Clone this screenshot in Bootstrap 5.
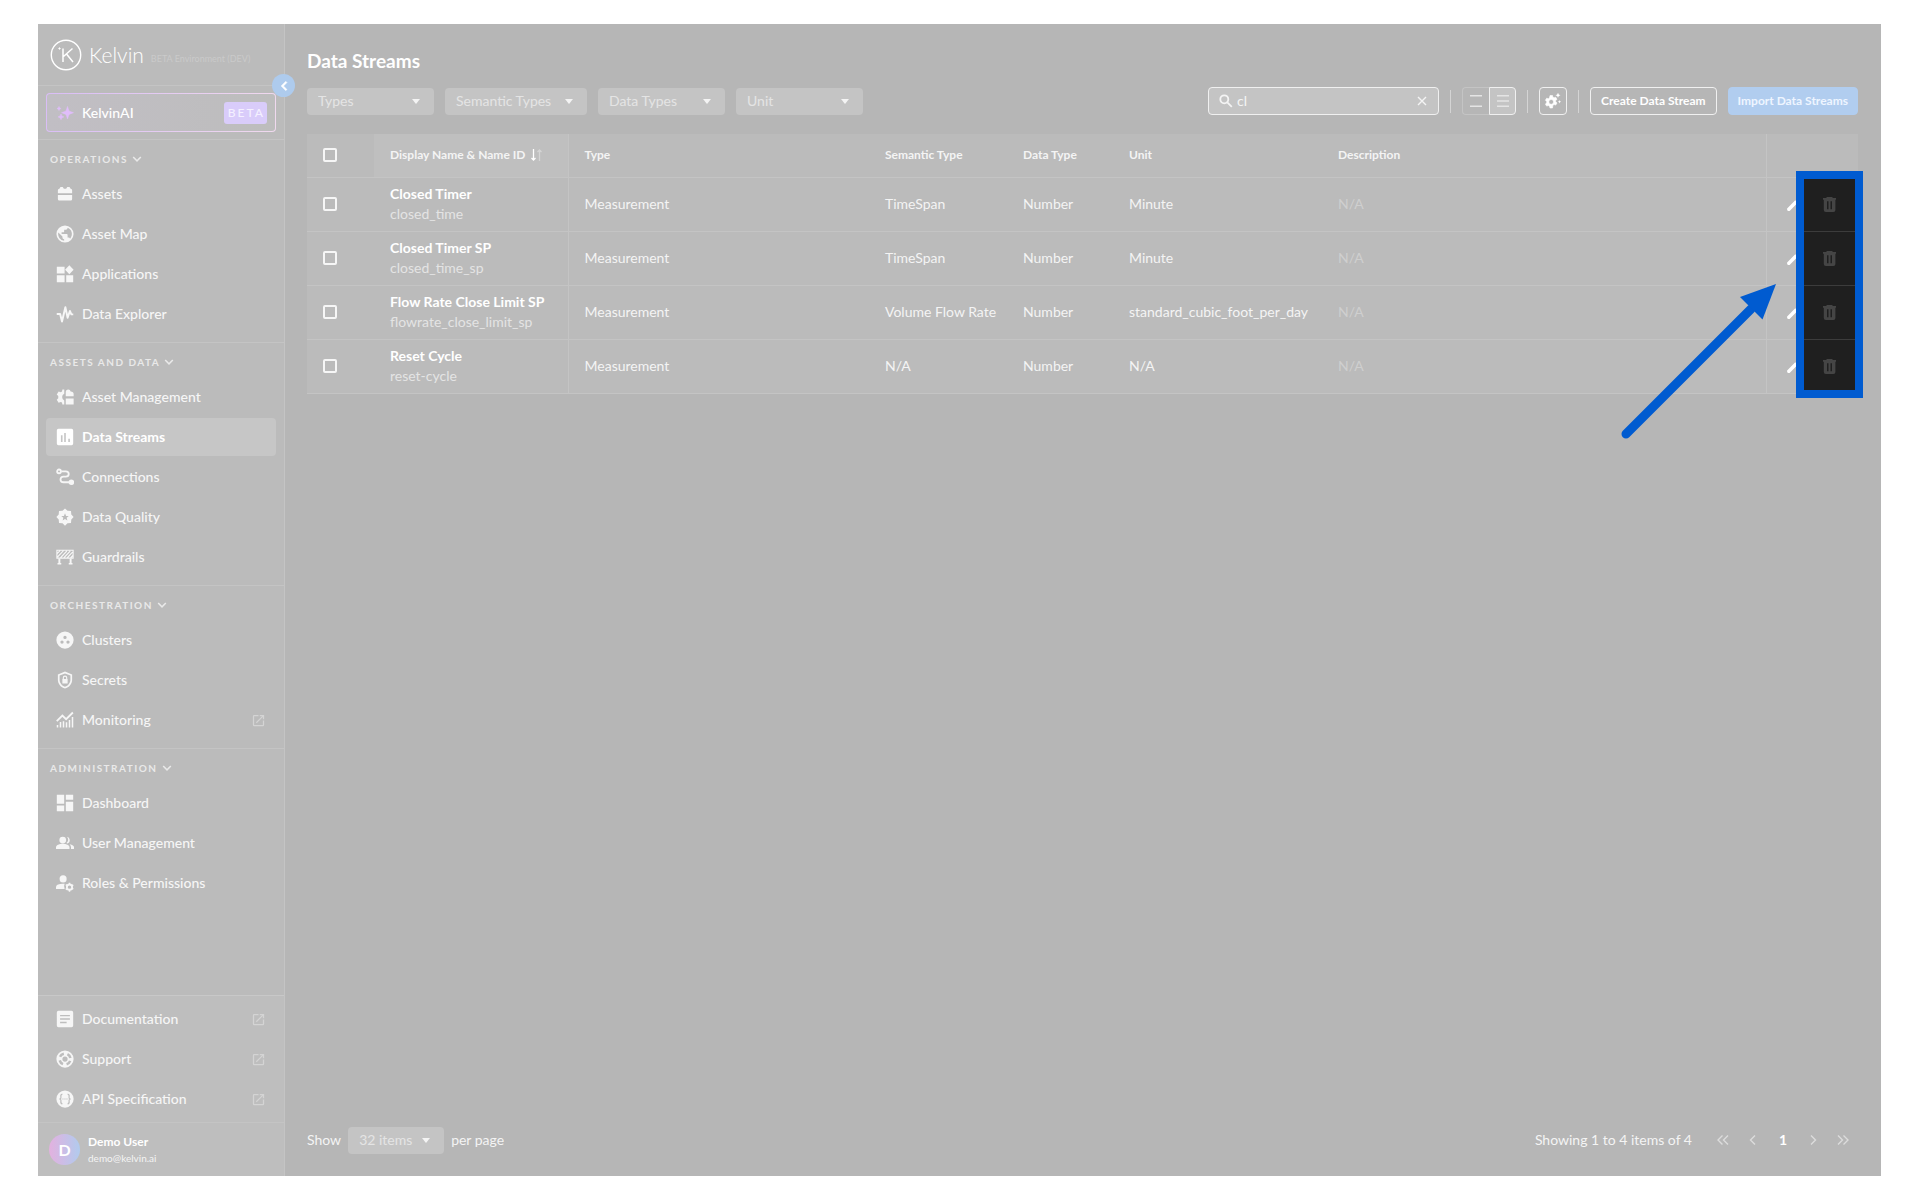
<!DOCTYPE html>
<html lang="en">
<head>
<meta charset="utf-8">
<meta name="viewport" content="width=device-width, initial-scale=1">
<title>Kelvin - Data Streams</title>
<link href="https://cdn.jsdelivr.net/npm/bootstrap@5.3.0/dist/css/bootstrap.min.css" rel="stylesheet">
<style>
:root{--line:#c4c4c4;--panel:#bbb;--field:#c4c4c4;--soft:#e4e4e4;--text:#f4f4f4;--blue:#005bd0}
body{font-family:Lato,"Liberation Sans",sans-serif;font-size:14px;line-height:20px;color:var(--text);background:#fff}
svg{fill:currentColor;flex:none;display:block}
.stage{height:100vh;padding:24px 39px 24px 38px}
.app{background:#b6b6b6}
.side{width:247px;background:var(--panel);border-right:1px solid var(--line)}
.brand{height:62px;padding:0 12px;gap:7px}
.brand-name{font-size:21px;font-weight:300;color:#fff;line-height:28px}
.brand-env{font-size:9px;line-height:12px;color:#cacaca;padding-top:8px}
.side .rule{border-bottom:1px solid var(--line)}
.ai-wrap{height:54px;padding:7px 8px}
.ai{height:39px;border:1px solid transparent;border-radius:4px;padding:0 8px 0 9px;color:#fff;font-weight:500;text-decoration:none;
 background:linear-gradient(90deg,#c1bec4,#bdbdbd) padding-box,linear-gradient(100deg,#d9bdf6,#f0d9ee) border-box}
.ai-tag{background:#d9ccfa;border-radius:3px;height:22px;line-height:22px;padding:0 2px 0 4px;font-size:12px;font-weight:500;letter-spacing:2px;color:#f4f0ff}
.collapse-btn{position:absolute;right:-11px;top:50px;width:23px;height:23px;border-radius:50%;background:#aecbed;border:0;color:#fff;padding:0;z-index:2}
.grp{padding:0 8px 7px}
.grp.flush{padding-bottom:2px}
.grp-head{height:35px;border:0;background:none;color:#e9e9e9;font-size:10px;font-weight:700;letter-spacing:.15em;line-height:14px;padding:2px 4px 0;gap:2px}
.side .nav-link{height:38px;margin-bottom:2px;padding:0 10px;gap:8px;color:#f6f6f6;font-weight:500;border-radius:4px}
.side .nav-link.active{background:#c6c6c6;color:#fff;font-weight:700}
.side .nav-link .ext{color:#d4d4d4;margin-left:auto}
.lower{background:#bebebe}
.avatar{width:31px;height:31px;border-radius:50%;background:linear-gradient(90deg,#e3b1df,#b1cbee);font-weight:700;font-size:16px;color:#fff}
.user-row{height:53px;padding:0 11px;gap:8px}
.uname{font-size:12px;line-height:16px;font-weight:700;color:#fff}
.umail{font-size:10px;line-height:16px}
.content{padding:23px 23px 22px 22px}
h1{font-size:19px;line-height:28px;font-weight:700;color:#fff;margin:0 0 12px}
.tools{gap:11px;margin-bottom:19px}
.pick{width:127px;height:27px;border:0;border-radius:4px;color:var(--soft);padding:0 28px 0 11px;font-size:14px;line-height:20px;appearance:none;
 background:var(--field) url("data:image/svg+xml,%3Csvg xmlns='http://www.w3.org/2000/svg' width='8' height='5'%3E%3Cpath d='M0 0h8L4 5z' fill='%23f4f4f4'/%3E%3C/svg%3E") no-repeat right 14px center}
.pick.wide{width:142px}
.pick.items{width:96px}
.find{width:231px;height:28px;border:1px solid #f0f0f0;border-radius:4px;background:var(--field);padding:0 10px;gap:4px}
.find input{background:none;border:0;outline:0;color:var(--text);min-width:0;padding:0}
.vsep{width:1px;height:23px;background:#d4d4d4}
.plain{border:0;background:none;color:inherit;padding:0}
.toggle button{width:27px;height:28px;border:1px solid #c4c4c4;background:none;color:#e4e4e4;padding:0}
.toggle button:first-child{border-radius:4px 0 0 4px;border-right:0}
.toggle button:last-child{border-color:#f0f0f0;background:#c4c4c4;border-radius:0 4px 4px 0}
.act{height:28px;border-radius:4px;font-size:12px;line-height:16px;font-weight:700;padding:0 10px;color:#fff;border:1px solid #f0f0f0}
.act.square{width:28px;padding:0}
.act.main{background:#b1cdef;border-color:#b1cdef;color:#eef5ff;padding:0 9px}
.grid-wrap{position:relative}
.streams{--bs-table-bg:var(--panel);--bs-table-color:var(--text);color:var(--text);table-layout:fixed;width:100%;margin:0;border-color:var(--line)}
.streams th,.streams td{height:54px;padding:0 0 0 16px;border-bottom:1px solid var(--line);vertical-align:middle}
.streams th{height:43px;font-size:12px;font-weight:700}
.streams .name{border-right:1px solid var(--line)}
.streams th.name{background:#bfbfbf}
.streams .edge{border-left:1px solid var(--line)}
.streams .edit{padding:0;color:#fff}
.streams td.del{background:#1f1f1f;border-color:#3c3c3c;color:#454545;padding:0 2px 0 0}
.streams .form-check-input{width:14px;height:14px;border:2px solid #f6f6f6;border-radius:2px;background-color:transparent;margin:0;display:block;float:none}
.nm{font-weight:700;color:#fff;line-height:20px}
.id{color:var(--soft);line-height:20px}
.streams .none{color:#cfcfcf}
.frame{position:absolute;right:-5px;top:37px;width:67px;height:227px;border:8px solid var(--blue);pointer-events:none}
.pointer{position:absolute;right:81px;top:150px;pointer-events:none;color:var(--blue)}
.perpage{gap:7px}
.pager button{width:30px;height:28px;border:0;background:none;color:#dcdcdc;padding:0}
</style>
</head>
<body>
<svg width="0" height="0" class="position-absolute" aria-hidden="true">
<symbol id="ext" viewBox="0 0 24 24"><path d="M19 19H5V5h7V3H5a2 2 0 0 0-2 2v14a2 2 0 0 0 2 2h14a2 2 0 0 0 2-2v-7h-2v7zM14 3v2h3.600l-9.800 9.800 1.400 1.400L19 6.400V10h2V3h-7z"/></symbol>
<symbol id="down" viewBox="0 0 24 24"><path d="M6.400 7.600 12 13.200l5.600-5.600L19.500 9.500 12 17 4.500 9.500z"/></symbol>
<symbol id="trash" viewBox="0 0 13 15"><path fill-rule="evenodd" d="M4 0h5l1 1h3v1.800h-.6V13a2 2 0 0 1-2 2H2.800a2 2 0 0 1-2-2V2.800H0V1h3zM4 4.300v7.900h1.500V4.300zm3.500 0v7.900H9V4.300z"/></symbol>
<symbol id="pencil" viewBox="0 0 24 24"><path d="M3 17.500 14.500 6l3.500 3.500L6.500 21H4.500A1.500 1.500 0 0 1 3 19.500zM20.700 7a1 1 0 0 0 0-1.400l-2.300-2.300a1 1 0 0 0-1.400 0L15.500 5 19 8.500z"/></symbol>
</svg>
<div class="stage">
<div class="app d-flex h-100">
<aside class="side d-flex flex-column position-relative flex-shrink-0">
 <div class="brand rule d-flex align-items-center">
  <svg width="32" height="32" viewBox="0 0 32 32" stroke="#fff" style="fill:none" aria-hidden="true"><circle cx="16" cy="16" r="14.700" stroke-width="1.400"/><path d="M13 9.500v13.500M22.500 9.500 13.500 17.500M16.500 15l6.500 8" stroke-width="1.500"/><circle cx="9.500" cy="9.500" r=".7" fill="#fff"/></svg>
  <span class="brand-name">Kelvin</span><span class="brand-env">BETA Environment (DEV)</span>
 </div>
 <button class="collapse-btn d-flex align-items-center justify-content-center" aria-label="Collapse menu"><svg width="18" height="18" viewBox="0 0 24 24"><path d="M15.800 7.400 14.400 6l-6 6 6 6 1.400-1.400L11.200 12z" stroke="#fff"/></svg></button>
 <div class="ai-wrap rule"><a href="#" class="ai d-flex align-items-center">
  <svg width="18" height="18" viewBox="0 0 18 18" style="fill:#e0bdfb"><path d="M11.500 2.500 13 7l4.500 1.700L13 10.400 11.500 15 10 10.400 5.500 8.700 10 7zM3 2.500l.7 1.400 1.400.6-1.400.6L3 6.500l-.7-1.400L.9 4.500l1.400-.6zM5 10l.9 2 2 .9-2 .9-.9 2-.9-2-2-.9 2-.9z" stroke="#e0bdfb" stroke-width=".5"/></svg>
  <span class="ms-2">KelvinAI</span><span class="ai-tag ms-auto">BETA</span></a></div>
 <section class="grp rule">
  <button class="grp-head d-flex align-items-center">OPERATIONS<svg width="14" height="14"><use href="#down"/></svg></button>
  <nav class="nav flex-column">
   <a class="nav-link d-flex align-items-center" href="#"><svg width="18" height="18" viewBox="0 0 24 24"><path d="M2.500 11V7a2 2 0 0 1 2-2L6 2.500h3L10.500 5h3L15 2.500h3L19.500 5a2 2 0 0 1 2 2v4zM2.500 13.200h19v5.300a2 2 0 0 1-2 2h-15a2 2 0 0 1-2-2z"/></svg>Assets</a>
   <a class="nav-link d-flex align-items-center" href="#"><svg width="18" height="18" viewBox="1.500 1.500 21 21"><path d="M12 2a10 10 0 1 0 0 20 10 10 0 0 0 0-20zm-1 17.900A8 8 0 0 1 4.200 10.200L9 15v1a2 2 0 0 0 2 2zm6.900-2.500A2 2 0 0 0 16 16h-1v-3a1 1 0 0 0-1-1H8v-2h2a1 1 0 0 0 1-1V7h2a2 2 0 0 0 2-2v-.4a8 8 0 0 1 2.900 12.800z"/></svg>Asset Map</a>
   <a class="nav-link d-flex align-items-center" href="#"><svg width="18" height="18" viewBox="1 1 22 22"><path d="M2 3h9.500v8.500H2zM2 13.500h9.500V22H2zM13.500 13.500H22V22h-8.500zM17.300 1.200l5.200 5.500-5.200 5.500-5.200-5.500z"/></svg>Applications</a>
   <a class="nav-link d-flex align-items-center" href="#"><svg width="18" height="18" viewBox="0 0 24 24" style="fill:none" stroke="currentColor" stroke-width="2.600" stroke-linejoin="round"><path d="M1 12h4.500l2.500 10 4.500-19 3 14 3-9 2 4.500H23"/></svg>Data Explorer</a>
  </nav>
 </section>
 <section class="grp rule">
  <button class="grp-head d-flex align-items-center">ASSETS AND DATA<svg width="14" height="14"><use href="#down"/></svg></button>
  <nav class="nav flex-column">
   <a class="nav-link d-flex align-items-center" href="#"><svg width="18" height="18" viewBox="0 0 24 24"><path d="M11 2v5.500a5 5 0 0 0 0 9V22H8.500L8 19.300 6.300 18.500 3.500 19.500 1 15.500 3 13.500V10.500L1 8.500 3.500 4.500 6.300 5.500 8 4.700 8.500 2zM13 11V5.500q0-3.500 3.500-3.500 2.500 0 3 2.500 4 .5 4 3.500v3zM13 14h10.500v8H13z"/></svg>Asset Management</a>
   <a class="nav-link active d-flex align-items-center" href="#" aria-current="page"><svg width="18" height="18" viewBox="1 1 22 22"><path fill-rule="evenodd" d="M4 2h16a2 2 0 0 1 2 2v16a2 2 0 0 1-2 2H4a2 2 0 0 1-2-2V4a2 2 0 0 1 2-2zm3 8v8h2v-8zm4-3v11h2V7zm5 7v4h2v-4z"/></svg>Data Streams</a>
   <a class="nav-link d-flex align-items-center" href="#"><svg width="18" height="18" viewBox="0 0 24 24" style="fill:none" stroke="currentColor" stroke-width="2.400"><circle cx="4" cy="4.500" r="2.500"/><circle cx="20.500" cy="19" r="2.500" fill="currentColor"/><path d="M7 4.500h6q4 0 4 3.500t-4 3.500h-3q-4 0-4 3.700t4 3.800h8"/></svg>Connections</a>
   <a class="nav-link d-flex align-items-center" href="#"><svg width="18" height="18" viewBox="0 0 24 24"><path fill-rule="evenodd" d="M12 .5l3.300 3.100 4.700.4.400 4.700L23.500 12l-3.100 3.300-.4 4.700-4.700.4L12 23.500l-3.300-3.100L4 20l-.4-4.700L.5 12l3.100-3.300L4 4l4.700-.4zM12 7l-1.400 3.500-3.600.2 2.800 2.300-1 3.500 3.200-2 3.200 2-1-3.500 2.800-2.300-3.600-.2z"/></svg>Data Quality</a>
   <a class="nav-link d-flex align-items-center" href="#"><svg width="18" height="18" viewBox="0 0 24 24" style="fill:none" stroke="currentColor" stroke-width="1.500"><path d="M1.200 3h21.600v10.500H1.200zM2 12l8-8.500M6 13l8.500-9M10.500 13l8.500-9M15 13l7-7.500M1.500 7.500 5.500 3.500M19.500 13l3-3"/><path d="M4.500 14v6M19.500 14v6" stroke-width="2.600"/><path d="M2 21h5M17 21h5" stroke-width="2"/></svg>Guardrails</a>
  </nav>
 </section>
 <section class="grp rule">
  <button class="grp-head d-flex align-items-center">ORCHESTRATION<svg width="14" height="14"><use href="#down"/></svg></button>
  <nav class="nav flex-column">
   <a class="nav-link d-flex align-items-center" href="#"><svg width="18" height="18" viewBox="0 0 24 24"><path fill-rule="evenodd" d="M12 .5a11.500 11.500 0 1 0 0 23 11.500 11.500 0 0 0 0-23zM8 17a2.200 2.200 0 1 1 0-4.400A2.200 2.200 0 0 1 8 17zM9.800 8.500a2.200 2.200 0 1 1 4.400 0 2.200 2.200 0 0 1-4.400 0zM16 17a2.200 2.200 0 1 1 0-4.400 2.200 2.200 0 0 1 0 4.400z"/></svg>Clusters</a>
   <a class="nav-link d-flex align-items-center" href="#"><svg width="18" height="18" viewBox="0 0 24 24"><path fill-rule="evenodd" d="M12 .8 2.500 4.500v7c0 5.500 4 10.300 9.500 11.800 5.500-1.500 9.500-6.300 9.500-11.800v-7zm0 2.500 7.200 2.800v5.400c0 4.300-3 8-7.200 9.400-4.200-1.400-7.200-5.100-7.200-9.400V6.100z"/><path d="M8.500 10.500H9V9a3 3 0 0 1 6 0v1.500h.5V16.500h-7zm2 0h3V9a1.500 1.500 0 0 0-3 0z"/></svg>Secrets</a>
   <a class="nav-link d-flex align-items-center" href="#"><svg width="18" height="18" viewBox="0 0 24 24" style="fill:none" stroke="currentColor" stroke-width="2"><path d="M1 13.500 8.500 6l5 5L22.500 2" stroke-width="2.400"/><path d="M2 22v-3.500M6 22v-7.500M10 22v-8.500M14 22v-7M18 22V12M22 22V8"/></svg>Monitoring<svg class="ext" width="15" height="15"><use href="#ext"/></svg></a>
  </nav>
 </section>
 <section class="grp flex-grow-1">
  <button class="grp-head d-flex align-items-center">ADMINISTRATION<svg width="14" height="14"><use href="#down"/></svg></button>
  <nav class="nav flex-column">
   <a class="nav-link d-flex align-items-center" href="#"><svg width="18" height="18" viewBox="1 1 22 22"><path d="M2 2h9v11H2zM2 15h9v7H2zM13 2h9v6h-9zM13 10.500h9V22h-9z"/></svg>Dashboard</a>
   <a class="nav-link d-flex align-items-center" href="#"><svg width="18" height="18" viewBox="0 0 24 24"><circle cx="9" cy="8" r="4.500"/><path d="M0 20v-2.500q0-2 2-3 3.500-1.500 7-1.500t7 1.500q2 1 2 3V20zM14 12a6 6 0 0 0 .5-8.300A4.500 4.500 0 0 1 15 12.500zM20 20v-2.500q0-2.300-1.800-4Q24 14.500 24 17.500V20z"/></svg>User Management</a>
   <a class="nav-link d-flex align-items-center" href="#"><svg width="18" height="18" viewBox="0 0 24 24"><circle cx="9.500" cy="6.500" r="4.700"/><path d="M0 20v-2.500q0-2.300 2-3.200 4-1.800 9.500-1.300-1.500 3.300 0 7z"/><circle cx="18" cy="17.500" r="3.500" style="fill:none" stroke="currentColor" stroke-width="2.400"/><path d="M17 11.500h2V14h-2zM17 21h2v2.500h-2zM12.500 15l1-1.700 2 1.200-1 1.700zM20.500 19.500l1-1.500 2 1.300-1 1.700zM21.500 16.500l-1-1.700 2-1.200 1 1.700zM13.500 21.500l-1-1.700 2-1.200 1 1.700z"/></svg>Roles &amp; Permissions</a>
  </nav>
 </section>
 <div class="lower">
 <section class="grp flush rule border-top pt-1" style="--bs-border-color:#c8c8c8">
  <nav class="nav flex-column">
   <a class="nav-link d-flex align-items-center" href="#"><svg width="18" height="18" viewBox="1 1 22 22"><path fill-rule="evenodd" d="M4 2h16a2 2 0 0 1 2 2v16a2 2 0 0 1-2 2H4a2 2 0 0 1-2-2V4a2 2 0 0 1 2-2zm2 5v1.700h12V7zm0 4.200v1.700h12v-1.700zm0 4.200v1.700h8v-1.700z"/></svg>Documentation<svg class="ext" width="15" height="15"><use href="#ext"/></svg></a>
   <a class="nav-link d-flex align-items-center" href="#"><svg width="18" height="18" viewBox="0 0 24 24"><path fill-rule="evenodd" d="M12 .5a11.500 11.500 0 1 0 0 23 11.500 11.500 0 0 0 0-23zM12 8.500a3.500 3.500 0 1 1 0 7 3.500 3.500 0 0 1 0-7z"/><circle cx="12" cy="12" r="7.300" style="fill:none" stroke="#bebebe" stroke-width="3.400" stroke-dasharray="6.470 5" stroke-dashoffset="-2.500"/></svg>Support<svg class="ext" width="15" height="15"><use href="#ext"/></svg></a>
   <a class="nav-link d-flex align-items-center" href="#"><svg width="18" height="18" viewBox="0 0 24 24"><circle cx="12" cy="12" r="11.500"/><g style="fill:none" stroke="#bebebe" stroke-width="1.600"><path d="M8.500 5.500Q6 6 6.500 9t-2 3q2.500 0 2 3t2 3.500M15.500 5.500Q18 6 17.500 9t2 3q-2.500 0-2 3t-2 3.500"/><path d="M8.500 12h7" stroke-dasharray="1.500 1.200"/></g></svg>API Specification<svg class="ext" width="15" height="15"><use href="#ext"/></svg></a>
  </nav>
 </section>
 <div class="user-row d-flex align-items-center">
  <span class="avatar d-flex align-items-center justify-content-center">D</span>
  <div><div class="uname">Demo User</div><div class="umail">demo@kelvin.ai</div></div>
 </div>
 </div>
</aside>
<main class="content d-flex flex-column flex-grow-1">
 <h1>Data Streams</h1>
 <div class="tools d-flex align-items-center">
  <select class="pick" aria-label="Types"><option>Types</option></select>
  <select class="pick wide" aria-label="Semantic Types"><option>Semantic Types</option></select>
  <select class="pick" aria-label="Data Types"><option>Data Types</option></select>
  <select class="pick" aria-label="Unit"><option>Unit</option></select>
  <div class="find d-flex align-items-center ms-auto">
   <svg width="14" height="14" viewBox="0 0 14 14" style="fill:none" stroke="currentColor" stroke-width="1.800"><circle cx="5.300" cy="5.300" r="4"/><path d="m8.300 8.300 4.500 4.500"/></svg>
   <input type="text" class="flex-grow-1" value="cl" aria-label="Search">
   <button class="plain" aria-label="Clear search"><svg width="12" height="12" viewBox="0 0 12 12" stroke="currentColor" stroke-width="1.400"><path d="m2 2 8 8M10 2l-8 8"/></svg></button>
  </div>
  <span class="vsep"></span>
  <div class="toggle d-flex" role="group" aria-label="Row density">
   <button class="d-flex align-items-center justify-content-center" aria-label="Comfortable"><svg width="12" height="12"><path d="M0 0h12v1.500H0zM0 10.500h12V12H0z"/></svg></button><button class="d-flex align-items-center justify-content-center" aria-label="Compact"><svg width="12" height="12"><path d="M0 0h12v1.500H0zM0 5.200h12v1.500H0zM0 10.500h12V12H0z"/></svg></button>
  </div>
  <span class="vsep"></span>
  <button class="btn act square d-flex align-items-center justify-content-center" aria-label="Table settings"><svg width="18" height="18" viewBox="0 0 18 18"><path fill-rule="evenodd" d="M6 3.500h2.500l.4 1.700 1.200.6 1.600-.6 1.300 2.100-1.300 1.200v1.300l1.300 1.200-1.300 2.100-1.600-.6-1.200.7L8.500 16H6l-.5-1.800-1.200-.7-1.600.6L1.400 12l1.300-1.200V9.500L1.400 8.300l1.300-2.100 1.600.5L5.500 6zM7.200 7.500a2.400 2.400 0 1 0 0 4.800 2.400 2.400 0 0 0 0-4.800z" stroke="#fff" stroke-width=".6"/><path d="m14 .8.8 1.700 1.700.8-1.700.8L14 5.800l-.8-1.700-1.700-.8 1.700-.8zM15.500 8l.5 1.200 1.200.5-1.200.5-.5 1.300-.5-1.300-1.200-.5 1.200-.5z"/></svg></button>
  <span class="vsep"></span>
  <button class="btn act">Create Data Stream</button>
  <button class="btn act main">Import Data Streams</button>
 </div>
 <div class="grid-wrap">
 <table class="table streams">
  <colgroup><col style="width:67px"><col style="width:194px"><col style="width:301px"><col style="width:138px"><col style="width:106px"><col style="width:209px"><col><col style="width:36px"><col style="width:56px"></colgroup>
  <thead><tr><th><input class="form-check-input" type="checkbox" aria-label="Select all"></th><th class="name" scope="col"><span class="d-flex align-items-center gap-1">Display Name &amp; Name ID<svg width="14" height="12" viewBox="0 0 14 12" style="fill:none" stroke="#fff" stroke-width="1.300"><path d="M4.500 0v11M2.500 9l2 2 2-2"/><path d="M10.500 12V1M8.500 3l2-2 2 2" opacity=".35"/></svg></span></th><th scope="col">Type</th><th scope="col">Semantic Type</th><th scope="col">Data Type</th><th scope="col">Unit</th><th scope="col">Description</th><th class="edge"></th><th></th></tr></thead>
  <tbody id="rows"></tbody>
 </table>
 <div class="frame"></div>
 <svg class="pointer" width="156" height="156" viewBox="0 0 156 156" aria-hidden="true"><path d="M5 150 130 25" stroke="currentColor" stroke-width="9" stroke-linecap="round"/><path d="M155 0 119 13 141.500 35.500z"/></svg>
 </div>
 <div class="d-flex align-items-center justify-content-between mt-auto">
  <div class="perpage d-flex align-items-center"><label for="size">Show</label><select id="size" class="pick items"><option>32 items</option></select><span>per page</span></div>
  <nav class="pager d-flex align-items-center" aria-label="Pages"><span class="me-3">Showing 1 to 4 items of 4</span>
   <button aria-label="First"><svg class="mx-auto" width="12" height="10" viewBox="0 0 12 10" style="fill:none" stroke="currentColor" stroke-width="1.400"><path d="M5.500.5 1 5l4.500 4.500M11 .5 6.500 5 11 9.500"/></svg></button><button aria-label="Previous"><svg class="mx-auto" width="12" height="10" viewBox="0 0 12 10" style="fill:none" stroke="currentColor" stroke-width="1.400"><path d="M8 .5 3.500 5 8 9.500"/></svg></button><button class="fw-bold text-white" aria-current="page">1</button><button aria-label="Next"><svg class="mx-auto" width="12" height="10" viewBox="0 0 12 10" style="fill:none" stroke="currentColor" stroke-width="1.400"><path d="M4 .5 8.500 5 4 9.500"/></svg></button><button aria-label="Last"><svg class="mx-auto" width="12" height="10" viewBox="0 0 12 10" style="fill:none" stroke="currentColor" stroke-width="1.400"><path d="M1 .5 5.500 5 1 9.500M6.500.5 11 5 6.500 9.500"/></svg></button>
  </nav>
 </div>
</main>
</div>
</div>
<script src="https://cdn.jsdelivr.net/npm/bootstrap@5.3.0/dist/js/bootstrap.bundle.min.js"></script>
<script>
const streams=[["Closed Timer","closed_time","TimeSpan","Minute"],["Closed Timer SP","closed_time_sp","TimeSpan","Minute"],["Flow Rate Close Limit SP","flowrate_close_limit_sp","Volume Flow Rate","standard_cubic_foot_per_day"],["Reset Cycle","reset-cycle","N/A","N/A"]];
document.getElementById("rows").innerHTML=streams.map(([n,i,s,u])=>`<tr><td><input class="form-check-input" type="checkbox" aria-label="Select ${n}"></td><td class="name"><div class="nm">${n}</div><div class="id">${i}</div></td><td>Measurement</td><td>${s}</td><td>Number</td><td>${u}</td><td class="none">N/A</td><td class="edit edge"><button class="plain d-block ms-auto" aria-label="Edit ${n}"><svg width="17" height="17"><use href="#pencil"/></svg></button></td><td class="del"><button class="plain d-block mx-auto" aria-label="Delete ${n}"><svg width="13" height="15"><use href="#trash"/></svg></button></td></tr>`).join("");
</script>
</body>
</html>
